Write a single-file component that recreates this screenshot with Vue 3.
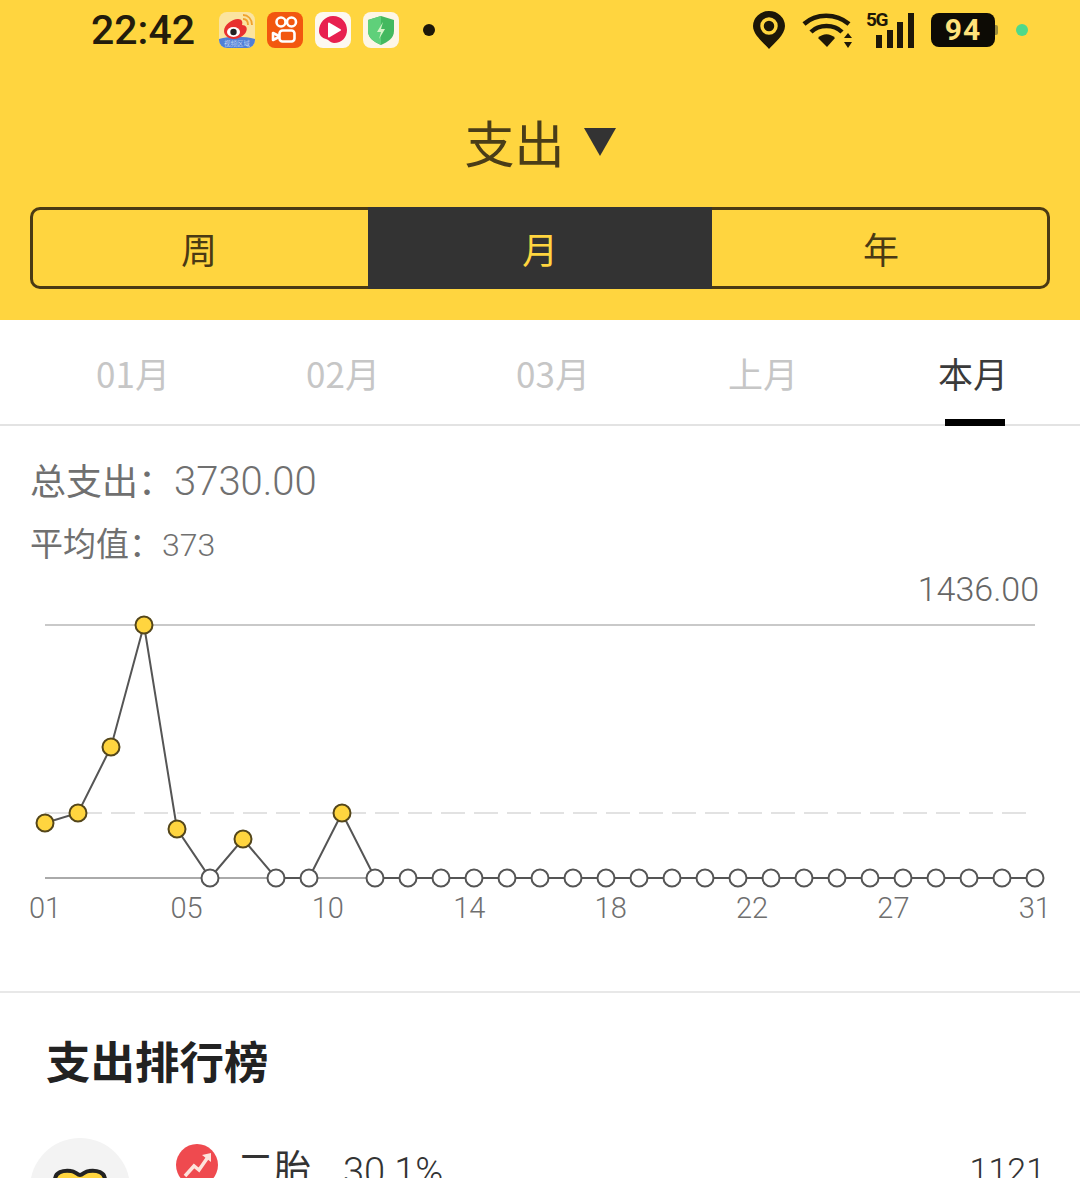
<template>
  <div class="page">
    <header class="head">
      <div class="status">
        <div class="status_left">
          <span class="time">22:42</span>
          <div class="apps">
            <svg width="36" height="36" viewBox="0 0 36 36">
              <rect width="36" height="36" rx="8" fill="#fbe4a0" />
              <path d="M0 27c10-3 26-3 36 0v1a8 8 0 0 1-8 8H8a8 8 0 0 1-8-8z" fill="#4f7fd6" />
              <path d="M5 19c0-6 8-12 14-12 4 0 5 3 4 6 4 0 6 3 4 7-2 4-8 7-12 7-6 0-10-4-10-8z" fill="#e8312f" />
              <ellipse cx="14.500" cy="20" rx="6.500" ry="5" fill="#fff" />
              <circle cx="14.500" cy="20" r="3.200" fill="#222" />
              <path d="M24 7c3 0 5 2 5 6M24 3c5 0 9 4 9 10" fill="none" stroke="#f0a22d" stroke-width="1.800" />
              <text x="18" y="33.500" text-anchor="middle" font-size="6.500" fill="#e6efff" font-family="Noto Sans CJK SC, sans-serif">视频区域</text>
            </svg>
            <svg width="36" height="36" viewBox="0 0 36 36">
              <rect width="36" height="36" rx="8" fill="#f2570f" />
              <g fill="none" stroke="#fff" stroke-width="2.600">
                <circle cx="14" cy="10" r="4.500" />
                <circle cx="24.500" cy="10" r="4.500" />
                <rect x="12.500" y="18.500" width="15" height="11" rx="3" />
                <path d="M12 24l-6-3v7l6-3" stroke-linejoin="round" />
              </g>
            </svg>
            <svg width="36" height="36" viewBox="0 0 36 36">
              <rect width="36" height="36" rx="8" fill="#fdf8f0" />
              <path d="M18 4c9 0 14 7 14 14s-5 13-13 13c-3 0-5-3-8-4-4-1-7-4-7-8C4 11 10 4 18 4z" fill="#e8204f" />
              <path d="M14 11.500l11 6.500-11 6.500z" fill="#fff" stroke="#fff" stroke-width="2" stroke-linejoin="round" />
            </svg>
            <svg width="36" height="36" viewBox="0 0 36 36">
              <rect width="36" height="36" rx="8" fill="#fdf6e6" />
              <path d="M18 4l13 4v11c0 7-6 11-13 14C11 30 5 26 5 19V8z" fill="#43b95f" />
              <path d="M18 4L5 8v11c0 7 6 11 13 14z" fill="#5fd07a" />
              <path d="M20 10l-6 10h4l-2 7 6-10h-4z" fill="#d6f4c8" />
            </svg>
          </div>
          <span class="status_dot"></span>
        </div>
        <div class="status_right">
          <svg width="32" height="38" viewBox="0 0 32 38">
            <path d="M16 38C11 32 0 24 0 15a16 15 0 0 1 32 0c0 9-11 17-16 23z" fill="#1d1708" />
            <circle cx="16" cy="15" r="7" fill="none" stroke="#ffd53f" stroke-width="3.500" />
          </svg>
          <svg width="52" height="36" viewBox="0 0 52 36">
            <g fill="none" stroke="#1d1708" stroke-width="4.500">
              <path d="M2 12C14 1 34 1 47 12" />
              <path d="M9 20c8-8 23-8 31 0" />
            </g>
            <path d="M16 26c5-5 12-5 17 0l-8 9z" fill="#1d1708" />
            <path d="M46 21l4 5h-8zM46 36l4-6h-8z" fill="#1d1708" />
          </svg>
          <div class="signal">
            <span class="five_g">5G</span>
            <svg width="49" height="38" viewBox="0 0 49 38">
              <g fill="#1d1708">
                <rect x="10" y="24" width="6" height="13" />
                <rect x="21" y="19" width="6" height="18" />
                <rect x="31" y="11" width="6" height="26" />
                <rect x="42" y="2" width="6" height="35" />
              </g>
            </svg>
          </div>
          <div class="battery">94</div>
          <span class="green_dot"></span>
        </div>
      </div>

      <div class="title">
        <span>支出</span>
        <i class="caret"></i>
      </div>

      <div class="segment">
        <div class="seg seg_week">周</div>
        <div class="seg seg_month">月</div>
        <div class="seg seg_year">年</div>
      </div>
    </header>

    <nav class="tabs">
      <div v-for="t in tabs" :key="t" class="tab" :class="{ on: t === '本月' }">{{ t }}</div>
    </nav>

    <section class="stats">
      <div class="total"><span class="cjk">总支出：</span>3730.00</div>
      <div class="avg"><span class="cjk">平均值：</span>373</div>
      <div class="max">1436.00</div>

      <svg class="chart" width="1080" height="290" viewBox="0 600 1080 290">
        <line x1="45" y1="625" x2="1035" y2="625" stroke="#c9c9c9" stroke-width="2" />
        <line x1="45" y1="813" x2="1035" y2="813" stroke="#e2e2e2" stroke-width="2" stroke-dasharray="24 9" />
        <line x1="45" y1="878" x2="1035" y2="878" stroke="#aaa" stroke-width="2" />
        <polyline :points="linePoints" fill="none" stroke="#555" stroke-width="2" />
        <circle
          v-for="p in points"
          :key="p.x"
          :cx="p.x"
          :cy="p.y"
          r="8.500"
          :fill="p.y < 878 ? '#ffd53f' : '#fff'"
          :stroke="p.y < 878 ? '#54461a' : '#555'"
          stroke-width="2"
        />
      </svg>

      <div class="axis">
        <span v-for="d in days" :key="d">{{ d }}</span>
      </div>
    </section>

    <section class="rank">
      <h2 class="rank_ttl">支出排行榜</h2>
      <div class="row">
        <div class="cat">
          <svg width="56" height="30" viewBox="0 0 56 30">
            <path d="M3 12C3 4 11 2 19 3c4 0 6 4 9 4s5-4 9-4c8-1 16 1 16 9v18H3z" fill="#ffd53f" stroke="#222" stroke-width="4" />
          </svg>
        </div>
        <svg class="trend" width="42" height="42" viewBox="0 0 42 42">
          <circle cx="21" cy="21" r="21" fill="#ef4a4f" />
          <path d="M9 32l9-10 5 4 9-13" fill="none" stroke="#fde3dc" stroke-width="3.500" />
          <path d="M26 11l9-2 0 9z" fill="#fde3dc" />
        </svg>
        <span class="row_name">二胎</span>
        <span class="row_pct">30.1%</span>
        <span class="row_val">1121</span>
      </div>
    </section>
  </div>
</template>

<script setup>
const tabs = ['01月', '02月', '03月', '上月', '本月']
const days = ['01', '05', '10', '14', '18', '22', '27', '31']

// 앞쪽 11일치 값만 있고 나머지는 0
const values = [823, 813, 747, 625, 829, 878, 839, 878, 878, 813]
const points = Array.from({ length: 31 }, (_, i) => ({
  x: 45 + i * 33,
  y: values[i] ?? 878
}))
const linePoints = points.map((p) => `${p.x},${p.y}`).join(' ')
</script>

<style>
body {
  background: #fff;
}
</style>

<style scoped>
.page {
  width: 1080px;
  height: 1178px;
  overflow: hidden;
  background: #fff;
  font-family: Roboto, "Noto Sans CJK SC", sans-serif;
  font-weight: 300;
}
.head {
  height: 320px;
  background: #ffd53f;
  box-sizing: border-box;
  padding: 0 30px;
}
.status {
  height: 60px;
  display: flex;
  justify-content: space-between;
  align-items: center;
}
.status_left {
  display: flex;
  align-items: center;
  padding-left: 61px;
}
.time {
  font-weight: 500;
  font-size: 41px;
  color: #231c0c;
  width: 128px;
}
.apps {
  display: flex;
  gap: 12px;
}
.status_dot {
  width: 12px;
  height: 12px;
  margin-left: 24px;
  border-radius: 50%;
  background: #1d1708;
}
.status_right {
  display: flex;
  align-items: center;
  padding-right: 22px;
}
.status_right > svg:nth-child(2) {
  margin-left: 17px;
}
.signal {
  position: relative;
  width: 49px;
  height: 38px;
  margin-left: 12px;
}
.five_g {
  position: absolute;
  left: 0;
  top: -3px;
  font-weight: 700;
  font-size: 19px;
  letter-spacing: -1.500px;
  color: #1d1708;
}
.battery {
  position: relative;
  width: 64px;
  height: 34px;
  margin-left: 16px;
  border-radius: 8px;
  background: #0d0b05;
  color: #ffe27a;
  font-weight: 700;
  font-size: 30px;
  letter-spacing: 1px;
  line-height: 34px;
  text-align: center;
}
.battery::after {
  content: "";
  position: absolute;
  right: -3px;
  top: 12px;
  width: 3px;
  height: 10px;
  border-radius: 0 2px 2px 0;
  background: #9a8a3a;
}
.green_dot {
  width: 12px;
  height: 12px;
  margin-left: 21px;
  border-radius: 50%;
  background: #4fd98a;
}
.title {
  height: 147px;
  box-sizing: border-box;
  padding-top: 56px;
  display: flex;
  justify-content: center;
  align-items: flex-start;
  font-family: "Noto Sans CJK SC", sans-serif;
  font-weight: 400;
  font-size: 50px;
  line-height: 50px;
  color: #4a3d18;
}
.caret {
  width: 0;
  height: 0;
  margin: 12px 0 0 19px;
  border-left: 16px solid transparent;
  border-right: 16px solid transparent;
  border-top: 28px solid #333;
}
.segment {
  display: flex;
  height: 82px;
  border-radius: 10px;
  box-shadow: inset 0 0 0 3px #4a3a14;
  overflow: hidden;
  font-family: "Noto Sans CJK SC", sans-serif;
  font-weight: 400;
  font-size: 36px;
  color: #4a3a14;
}
.seg {
  display: flex;
  justify-content: center;
  align-items: center;
}
.seg_week {
  width: 338px;
}
.seg_month {
  width: 344px;
  background: #333;
  color: #ffd53f;
}
.seg_year {
  flex: 1;
}
.tabs {
  display: flex;
  height: 106px;
  box-sizing: border-box;
  padding: 0 0 0 28px;
  border-bottom: 2px solid #e3e3e3;
  font-family: "Noto Sans CJK SC", sans-serif;
  font-weight: 400;
  font-size: 35px;
  color: #c6c6c6;
}
.tab {
  width: 210px;
  height: 104px;
  line-height: 106px;
  text-align: center;
  position: relative;
}
.tab.on {
  color: #3a3a3a;
}
.tab.on::after {
  content: "";
  position: absolute;
  left: 77px;
  bottom: -2px;
  width: 60px;
  height: 7px;
  background: #000;
}
.stats {
  height: 567px;
  box-sizing: border-box;
  border-bottom: 2px solid #e8e8e8;
  padding-top: 28px;
  color: #707070;
}
.total {
  padding-left: 30px;
  font-size: 40px;
  line-height: 50px;
}
.avg {
  padding-left: 30px;
  margin-top: 12px;
  font-size: 32px;
  line-height: 46px;
}
.cjk {
  font-family: "Noto Sans CJK SC", sans-serif;
  font-weight: 400;
}
.total .cjk {
  font-size: 36px;
}
.avg .cjk {
  font-size: 33px;
}
.max {
  margin-top: 1px;
  padding-right: 41px;
  text-align: right;
  font-size: 34px;
  line-height: 40px;
  height: 31px;
  color: #666;
}
.chart {
  display: block;
}
.axis {
  display: flex;
  justify-content: space-between;
  padding: 0 29px;
  font-size: 29px;
  line-height: 36px;
  color: #6f6f6f;
}
.rank_ttl {
  margin: 0;
  padding: 39px 0 0 46px;
  font-family: "Noto Sans CJK SC", sans-serif;
  font-weight: 700;
  font-size: 44.500px;
  line-height: 56px;
  color: #222;
}
.row {
  display: flex;
  align-items: flex-start;
  margin-top: 50px;
  padding-left: 30px;
  color: #333;
}
.cat {
  width: 100px;
  height: 100px;
  flex: none;
  border-radius: 50%;
  background: #f3f3f3;
  display: flex;
  justify-content: center;
  padding-top: 30px;
  box-sizing: border-box;
}
.trend {
  flex: none;
  margin: 6px 0 0 46px;
}
.row_name {
  margin-left: 19px;
  font-family: "Noto Sans CJK SC", sans-serif;
  font-weight: 400;
  font-size: 37px;
  line-height: 56px;
}
.row_pct {
  margin-left: 32px;
  font-size: 38px;
  line-height: 68px;
}
.row_val {
  margin-left: auto;
  margin-right: 35px;
  font-size: 34px;
  line-height: 64px;
}
</style>
